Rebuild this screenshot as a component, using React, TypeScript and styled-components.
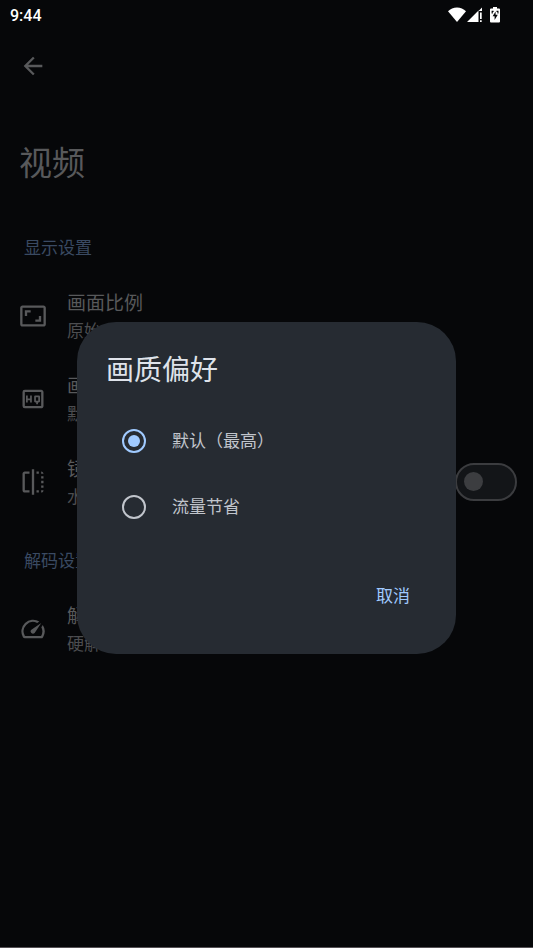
import React from "react";
import styled, { createGlobalStyle } from "styled-components";
import { MdArrowBack, MdAspectRatio, MdFlip, MdOutlineHighQuality, MdSpeed } from "react-icons/md";

const color = {
  page: "#060709",
  muted: "#58595b",
  faded: "#4c4d50",
  section: "#3a4a62",
  dialog: "#262b32",
  heading: "#dfe3ea",
  label: "#c1c5cc",
  accent: "#a0caff",
};

const GlobalStyle = createGlobalStyle`
  *, *::before, *::after { box-sizing: border-box; }
  body {
    margin: 0;
    background: ${color.page};
    font-family: Roboto, "Noto Sans CJK SC", sans-serif;
  }
  h1, h2, p, fieldset { margin: 0; padding: 0; border: 0; }
`;

const Screen = styled.div`
  display: flex;
  flex-direction: column;
  min-height: 100vh;
  background: ${color.page};
  border-bottom: 1px solid #555155;
`;

const StatusBar = styled.header`
  display: flex;
  align-items: center;
  justify-content: space-between;
  height: 32px;
  padding: 0 33px 2px 10px;
  color: #fff;
  font-size: 16px;
  font-weight: 500;
`;

const StatusIcons = styled.div`
  display: flex;
  align-items: center;
  gap: 8px;
`;

const NetworkIcons = styled.div`
  display: flex;
  gap: 1px;
`;

const AppBar = styled.nav`
  display: flex;
  align-items: center;
  height: 68px;
  padding: 0 10px;
`;

const BackButton = styled.button`
  display: grid;
  place-items: center;
  width: 46px;
  height: 46px;
  padding: 0;
  border: 0;
  background: none;
  color: ${color.muted};
`;

const PageTitle = styled.h1`
  padding: 40px 19px 22px;
  color: ${color.muted};
  font-size: 33px;
  line-height: 48px;
  font-weight: 400;
`;

const SectionTitle = styled.h2`
  padding: 26px 24px 14px;
  color: ${color.section};
  font-size: 17px;
  line-height: 24px;
  font-weight: 400;
`;

const Row = styled.div`
  display: flex;
  align-items: center;
  gap: 20px;
  padding: 12px 16px 12px 19px;
  color: ${color.muted};
`;

const RowText = styled.div`
  flex: 1;
  min-width: 0;
  padding-top: 4px;
`;

const RowTitle = styled.label`
  display: block;
  font-size: 19px;
  line-height: 28px;
`;

const RowSummary = styled.p`
  color: ${color.faded};
  font-size: 17px;
  line-height: 27px;
`;

const Switch = styled.input`
  appearance: none;
  display: flex;
  align-items: center;
  width: 62px;
  height: 38px;
  margin: 0;
  padding-left: 7px;
  border: 2px solid #3b3c3f;
  border-radius: 19px;
  background: #131518;
  &::before {
    content: "";
    width: 19px;
    height: 19px;
    border-radius: 50%;
    background: #3c3d40;
  }
`;

const Overlay = styled.div`
  position: fixed;
  inset: 0;
  display: grid;
  place-items: center;
  padding: 28px 32px 0;
`;

const Dialog = styled.section`
  width: 100%;
  max-width: 379px;
  padding: 31px 30px 30px 29px;
  border-radius: 39px;
  background: ${color.dialog};
`;

const DialogTitle = styled.h2`
  color: ${color.heading};
  font-size: 28px;
  line-height: 36px;
  font-weight: 400;
`;

const Options = styled.fieldset`
  padding: 19px 0 28px;
`;

const Option = styled.label`
  display: flex;
  align-items: center;
  gap: 26px;
  height: 66px;
  padding: 0 16px;
  color: ${color.label};
  font-size: 17px;
  line-height: 24px;
`;

const Radio = styled.input`
  appearance: none;
  display: grid;
  place-items: center;
  flex: none;
  width: 24px;
  height: 24px;
  margin: 0;
  border: 2px solid ${color.label};
  border-radius: 50%;
  &:checked { border-color: ${color.accent}; }
  &:checked::before {
    content: "";
    width: 12px;
    height: 12px;
    border-radius: 50%;
    background: ${color.accent};
  }
`;

const Actions = styled.div`
  display: flex;
  justify-content: flex-end;
`;

const TextButton = styled.button`
  height: 56px;
  padding: 0 16px;
  border: 0;
  background: none;
  color: ${color.accent};
  font-family: inherit;
  font-size: 17px;
  line-height: 24px;
`;

function WifiIcon() {
  return (
    <svg width="18" height="16" viewBox="0 0 18 16" fill="#fff" aria-hidden="true">
      <path d="M9 15 0 4.200C2.400 2 5.500 0.500 9 0.500s6.600 1.500 9 3.700z" />
    </svg>
  );
}

function SignalIcon() {
  return (
    <svg width="15" height="16" viewBox="0 0 15 16" fill="#fff" aria-hidden="true">
      <path d="M0 15 11.500 3.500V15zM15 0.500v3.500h-3.500zM13 5.500h1.700v6.500h-1.700zM13 13.200h1.700v1.800h-1.700z" />
    </svg>
  );
}

function BatteryIcon() {
  return (
    <svg width="10" height="16" viewBox="0 0 10 16" aria-hidden="true">
      <path fill="#fff" d="M3 0h4v1.500h2q1 0 1 1v12q0 1-1 1H1q-1 0-1-1v-12q0-1 1-1h2z" />
      <path fill={color.page} d="M5.600 4.500 2.600 9.300h2v3.600l3.200-5.200H5.600zM1.600 3.800h2v1.300h-.8v1.500H1.600zM6.500 3.800h2v2.800H7.400V5.100h-.9z" />
    </svg>
  );
}

export default function App() {
  return (
    <>
      <GlobalStyle />
      <Screen>
        <StatusBar>
          <time>9:44</time>
          <StatusIcons>
            <NetworkIcons>
              <WifiIcon />
              <SignalIcon />
            </NetworkIcons>
            <BatteryIcon />
          </StatusIcons>
        </StatusBar>
        <AppBar>
          <BackButton type="button" aria-label="返回">
            <MdArrowBack size={28} />
          </BackButton>
        </AppBar>
        <main>
          <PageTitle>视频</PageTitle>
          <SectionTitle>显示设置</SectionTitle>
          <Row>
            <MdAspectRatio size={28} />
            <RowText>
              <RowTitle as="p">画面比例</RowTitle>
              <RowSummary>原始</RowSummary>
            </RowText>
          </Row>
          <Row>
            <MdOutlineHighQuality size={28} />
            <RowText>
              <RowTitle as="p">画质</RowTitle>
              <RowSummary>默认</RowSummary>
            </RowText>
          </Row>
          <Row>
            <MdFlip size={28} />
            <RowText>
              <RowTitle htmlFor="mirror">镜像</RowTitle>
              <RowSummary>水平翻转</RowSummary>
            </RowText>
            <Switch id="mirror" type="checkbox" role="switch" />
          </Row>
          <SectionTitle>解码设置</SectionTitle>
          <Row>
            <MdSpeed size={28} />
            <RowText>
              <RowTitle as="p">解码</RowTitle>
              <RowSummary>硬解</RowSummary>
            </RowText>
          </Row>
        </main>
      </Screen>
      <Overlay>
        <Dialog role="dialog" aria-modal="true" aria-labelledby="dialog-title">
          <DialogTitle id="dialog-title">画质偏好</DialogTitle>
          <Options aria-labelledby="dialog-title">
            <Option>
              <Radio type="radio" name="quality" defaultChecked />
              默认（最高）
            </Option>
            <Option>
              <Radio type="radio" name="quality" />
              流量节省
            </Option>
          </Options>
          <Actions>
            <TextButton type="button">取消</TextButton>
          </Actions>
        </Dialog>
      </Overlay>
    </>
  );
}
